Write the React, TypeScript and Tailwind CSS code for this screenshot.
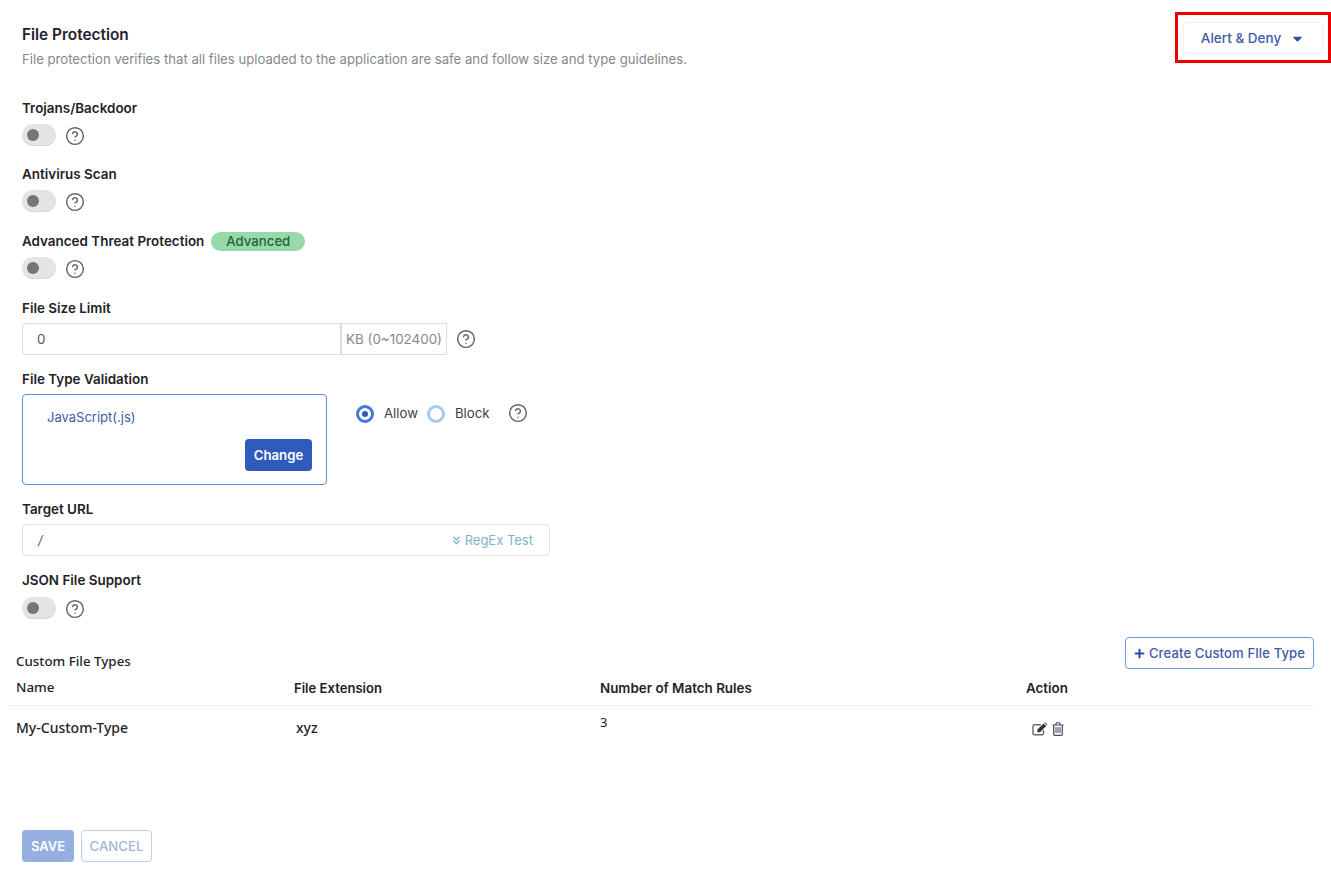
import React from 'react';
import { CircleHelp, ChevronsDown } from 'lucide-react';
import { FaPlus, FaCaretDown } from 'react-icons/fa';

const Help: React.FC<{ className?: string }> = ({ className = '' }) => (
  <CircleHelp className={`w-5 h-5 text-[#5f5f5f] ${className}`} strokeWidth={1.7} />
);

const Label: React.FC<{ children: React.ReactNode }> = ({ children }) => (
  <div className="h-5 text-[13.45px] leading-5 font-semibold text-[#1f2328]">{children}</div>
);

const Toggle: React.FC = () => (
  <div className="flex items-center">
    <div className="w-[34px] h-[22px] rounded-full bg-[#e4e4e4] border-b border-[#d6d6d6] flex items-center pl-[5px]">
      <span className="w-3 h-3 rounded-full bg-[#757575]" />
    </div>
    <Help className="ml-[9px] mt-[2px]" />
  </div>
);

const EditIcon: React.FC = () => (
  <svg className="w-4 h-[14px]" viewBox="0 0 16 14" fill="none">
    <path d="M11.5 8v3.2a1.6 1.6 0 0 1-1.6 1.6H2.6A1.6 1.6 0 0 1 1 11.2V4.4a1.6 1.6 0 0 1 1.6-1.6h6.2" stroke="#666666" strokeWidth="1.4" />
    <path d="M5.4 7.6 11.6 1.4l2.6 2.6-6.2 6.2H5.4z M12.4.7l.8-.5 2.2 2.2-.5.8z" fill="#333333" />
  </svg>
);

const TrashIcon: React.FC = () => (
  <svg className="w-3 h-[14px]" viewBox="0 0 12 14" fill="none" stroke="#3f4a5a">
    <path d="M.5 3h11M4 3V1.4c0-.4.3-.7.7-.7h2.6c.4 0 .7.3.7.7V3" strokeWidth="1.1" />
    <path d="M1.7 3v9c0 .7.5 1.3 1.2 1.3h6.2c.7 0 1.2-.6 1.2-1.3V3" strokeWidth="1.2" />
    <path d="M4 5v6M6 5v6M8 5v6" strokeWidth="1" />
  </svg>
);

export default function App() {
  return (
    <div className="relative w-[1331px] h-[875px] overflow-hidden bg-white font-['Inter',sans-serif]">
      {/* Header */}
      <div className="flex justify-between pl-[22px] pr-2 pt-[22px]">
        <div>
          <div className="mt-[1px] h-6 text-[15.4px] leading-6 font-semibold text-[#1f2328]">File Protection</div>
          <div className="mt-[2px] h-5 text-[13.16px] leading-5 text-[#85888c]">
            File protection verifies that all files uploaded to the application are safe and follow size and type guidelines.
          </div>
        </div>
        <button className="w-[140px] h-8 pt-[1px] rounded border border-[#eeeeee] bg-white text-[13.5px] font-medium text-[#3f5aa8] flex items-center justify-center gap-[9px]">
          Alert &amp; Deny
          <FaCaretDown className="w-[15px] h-[15px] text-[#2f4fa5]" />
        </button>
      </div>

      {/* Form */}
      <div className="pl-[22px] pt-[29px]">
        <Label>Trojans/Backdoor</Label>
        <div className="mt-[6px]"><Toggle /></div>

        <div className="mt-[18px]"><Label>Antivirus Scan</Label></div>
        <div className="mt-[6px]"><Toggle /></div>

        <div className="mt-[19px] flex items-center gap-[7px]">
          <Label>Advanced Threat Protection</Label>
          <span className="w-[94px] h-[19px] rounded-full bg-[#98d9aa] text-[13.2px] leading-[19px] font-medium text-[#27613b] text-center">Advanced</span>
        </div>
        <div className="mt-[6px]"><Toggle /></div>

        <div className="mt-[19px]"><Label>File Size Limit</Label></div>
        <div className="mt-[5px] flex items-center">
          <div className="w-[319px] h-8 rounded-l border border-[#dcdcdc] pl-[14px] text-[13.4px] leading-[30px] text-[#555a60]">0</div>
          <div className="w-[106px] h-8 border border-[#dcdcdc] text-[13.4px] leading-[30px] text-[#85888c] pl-[4px] whitespace-nowrap">KB (0~102400)</div>
          <Help className="ml-[9px]" />
        </div>

        <div className="mt-[14px]"><Label>File Type Validation</Label></div>
        <div className="mt-[5px] flex items-start">
          <div className="w-[305px] h-[91px] rounded border border-[#5b8fdf] pl-6 pr-[14px] pt-3">
            <div className="text-[13px] leading-5 text-[#3f5aa8]">JavaScript(.js)</div>
            <div className="flex justify-end mt-3">
              <button className="w-[67px] h-8 pt-[1px] rounded bg-[#2f5bbd] text-white text-[13.2px] font-semibold">Change</button>
            </div>
          </div>
          <div className="ml-[29px] mt-[10px] flex items-center text-[13.2px] text-[#3c4043]">
            <span className="w-[18px] h-[18px] rounded-full border-[3px] border-[#3f7bdc] flex items-center justify-center">
              <span className="w-[6px] h-[6px] rounded-full bg-[#2f5bbd]" />
            </span>
            <span className="ml-[10px]">Allow</span>
            <span className="ml-[9px] w-[18px] h-[18px] rounded-full border-[3px] border-[#a9c8f2]" />
            <span className="ml-[10px]">Block</span>
            <Help className="ml-[19px] -mt-[2px]" />
          </div>
        </div>

        <div className="mt-[14px]"><Label>Target URL</Label></div>
        <div className="mt-[5px] w-[528px] h-8 pt-[1px] rounded border border-[#e0e0e0] flex items-center justify-between pl-[15px] pr-4 text-[13px]">
          <span className="italic text-[#555a60]">/</span>
          <span className="flex items-center gap-[2px] text-[#7db5cc]">
            <ChevronsDown className="w-[13px] h-[13px]" strokeWidth={2.4} />
            RegEx Test
          </span>
        </div>

        <div className="mt-[14px]"><Label>JSON File Support</Label></div>
        <div className="mt-[7px]"><Toggle /></div>
      </div>

      {/* Custom file types */}
      <div className="mt-[18px] pl-2 pr-[17px]">
        <div className="flex justify-between items-start pl-2">
          <div className="mt-[14px] text-[13.35px] leading-5 font-medium text-[#1f2328] font-['Noto_Sans',sans-serif]">Custom File Types</div>
          <button className="w-[189px] h-8 pt-[1px] rounded border border-[#6f9ae0] text-[13.1px] font-medium text-[#3f5aa8] flex items-center justify-center gap-[4px] tracking-[0.1px]">
            <FaPlus className="w-[11px] h-[11px] text-[#2f4fa5]" />
            Create Custom FIle Type
          </button>
        </div>
        <div className="grid grid-cols-[278px_306px_426px_1fr] mt-[7px] pl-2 h-[28px] border-b border-[#f0f0f0] text-[13.4px] leading-5 font-semibold text-[#1f2328]">
          <div className="font-['Noto_Sans',sans-serif] font-medium -mt-[1px]">Name</div>
          <div className="text-[13.1px]">File Extension</div>
          <div>Number of Match Rules</div>
          <div>Action</div>
        </div>
        <div className="grid grid-cols-[278px_306px_426px_1fr] pl-2 text-[14px] font-medium text-[#1f2328] font-['Noto_Sans',sans-serif]">
          <div className="pt-3 leading-5">My-Custom-Type</div>
          <div className="pt-3 pl-[2px] leading-5">xyz</div>
          <div className="pt-[6px] leading-5 font-normal text-[13px]">3</div>
          <div className="pt-[16px] pl-[6px] flex items-start gap-[4px]">
            <EditIcon />
            <TrashIcon />
          </div>
        </div>
      </div>

      {/* Footer actions */}
      <div className="absolute left-[22px] top-[830px] flex gap-[7px]">
        <button className="w-[52px] h-8 pt-[1px] rounded bg-[#95b0e0] text-white text-[13px] font-semibold">SAVE</button>
        <button className="w-[71px] h-8 pt-[1px] rounded border border-[#bcd0f0] text-[#a5b5d8] text-[13.2px] font-medium">CANCEL</button>
      </div>

      {/* Red annotation */}
      <div className="absolute left-[1175px] top-[12px] w-[156px] h-[51px] border-[3px] border-[#ee0000]" />
    </div>
  );
}
